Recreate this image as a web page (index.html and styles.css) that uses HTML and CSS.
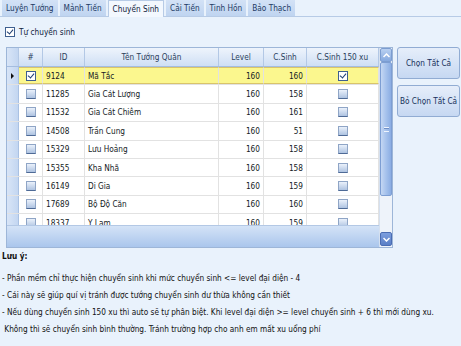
FILE: index.html
```html
<!DOCTYPE html>
<html lang="vi">
  <head>
    <meta charset="UTF-8" />
    <title>Chuyển Sinh</title>
    <link rel="stylesheet" href="styles.css">
  </head>

  <body>
    <div class="tabs">
      <span class="tab">Luyện Tướng</span>
      <span class="tab">Mảnh Tiến</span>
      <span class="tab active">Chuyển Sinh</span>
      <span class="tab">Cải Tiến</span>
      <span class="tab">Tinh Hồn</span>
      <span class="tab">Bảo Thạch</span>
    </div>

    <label class="auto">
      <span class="cb checked"></span>
      Tự chuyển sinh
    </label>

    <div class="main">
      <div class="grid">
        <div class="grid-main">
          <div class="row head">
            <div class="sel"></div>
            <div>#</div>
            <div>ID</div>
            <div>Tên Tướng Quân</div>
            <div>Level</div>
            <div>C.Sinh</div>
            <div>C.Sinh 150 xu</div>
          </div>
          <div class="body">
            <div class="row current">
              <div class="sel"><span class="arrow"></span></div>
              <div class="c"><span class="cb checked"></span></div>
              <div>9124</div>
              <div>Mã Tắc</div>
              <div class="r">160</div>
              <div class="r">160</div>
              <div class="c"><span class="cb checked"></span></div>
            </div>
            <div class="row">
              <div class="sel"></div>
              <div class="c"><span class="cb"></span></div>
              <div>11285</div>
              <div>Gia Cát Lượng</div>
              <div class="r">160</div>
              <div class="r">158</div>
              <div class="c"><span class="cb"></span></div>
            </div>
            <div class="row">
              <div class="sel"></div>
              <div class="c"><span class="cb"></span></div>
              <div>11532</div>
              <div>Gia Cát Chiêm</div>
              <div class="r">160</div>
              <div class="r">161</div>
              <div class="c"><span class="cb"></span></div>
            </div>
            <div class="row">
              <div class="sel"></div>
              <div class="c"><span class="cb"></span></div>
              <div>14508</div>
              <div>Trần Cung</div>
              <div class="r">160</div>
              <div class="r">51</div>
              <div class="c"><span class="cb"></span></div>
            </div>
            <div class="row">
              <div class="sel"></div>
              <div class="c"><span class="cb"></span></div>
              <div>15329</div>
              <div>Lưu Hoảng</div>
              <div class="r">160</div>
              <div class="r">158</div>
              <div class="c"><span class="cb"></span></div>
            </div>
            <div class="row">
              <div class="sel"></div>
              <div class="c"><span class="cb"></span></div>
              <div>15355</div>
              <div>Kha Nhã</div>
              <div class="r">160</div>
              <div class="r">158</div>
              <div class="c"><span class="cb"></span></div>
            </div>
            <div class="row">
              <div class="sel"></div>
              <div class="c"><span class="cb"></span></div>
              <div>16149</div>
              <div>Di Gia</div>
              <div class="r">160</div>
              <div class="r">159</div>
              <div class="c"><span class="cb"></span></div>
            </div>
            <div class="row">
              <div class="sel"></div>
              <div class="c"><span class="cb"></span></div>
              <div>17689</div>
              <div>Bộ Độ Căn</div>
              <div class="r">160</div>
              <div class="r">160</div>
              <div class="c"><span class="cb"></span></div>
            </div>
            <div class="row">
              <div class="sel"></div>
              <div class="c"><span class="cb"></span></div>
              <div>18337</div>
              <div>Y Lam</div>
              <div class="r">160</div>
              <div class="r">159</div>
              <div class="c"><span class="cb"></span></div>
            </div>
          </div>
          <div class="foot"></div>
        </div>

        <div class="vscroll">
          <div class="sb-btn up">
            <svg width="7" height="5" viewBox="0 0 7 5"><path d="M0.5 4 L3.5 1 L6.5 4" fill="none" stroke="#fff" stroke-width="1.5"/></svg>
          </div>
          <div class="sb-thumb"><span class="grip"></span></div>
          <div class="sb-track"></div>
          <div class="sb-btn down">
            <svg width="7" height="5" viewBox="0 0 7 5"><path d="M0.5 1 L3.5 4 L6.5 1" fill="none" stroke="#fff" stroke-width="1.5"/></svg>
          </div>
        </div>
      </div>

      <div class="actions">
        <button class="btn">Chọn Tất Cả</button>
        <button class="btn">Bỏ Chọn Tất Cả</button>
      </div>
    </div>

    <div class="notes">
      <p class="title">Lưu ý:</p>
      <p>- Phần mềm chỉ thực hiện chuyển sinh khi mức chuyển sinh &lt;= level đại diện - 4</p>
      <p>- Cái này sẽ giúp quí vị tránh được tướng chuyển sinh dư thừa không cần thiết</p>
      <p>- Nếu dùng chuyển sinh 150 xu thì auto sẽ tự phân biệt. Khi level đại diện &gt;= level chuyển sinh + 6 thì mới dùng xu.</p>
      <p>&nbsp;Không thì sẽ chuyển sinh bình thường. Tránh trường hợp cho anh em mất xu uổng phí</p>
    </div>
  </body>
</html>
```

FILE: styles.css
```css
* {
  margin: 0;
  padding: 0;
  box-sizing: border-box;
}

body {
  font-family: "DejaVu Sans Condensed", "Liberation Sans", sans-serif;
  font-size: 8.2px;
  color: #141a24;
  background: #e9f2fc;
  width: 461px;
  height: 346px;
  overflow: hidden;
}

/* tab strip */
.tabs {
  display: flex;
  gap: 2px;
  height: 17px;
  padding-left: 2px;
  border-bottom: 1px solid #b7cbe6;
}

.tab {
  display: flex;
  align-items: center;
  padding: 0 4px;
  height: 16px;
  background: linear-gradient(#d3e2f6, #bfd4f0);
  color: #1d3a64;
}

.tab.active {
  background: #f3f8fe;
  height: 17px;
  border: 1px solid #b7cbe6;
  border-bottom: none;
  color: #10223c;
}

/* auto checkbox */
.auto {
  display: flex;
  align-items: center;
  gap: 4px;
  height: 30px;
  padding-left: 5px;
  color: #10223c;
}

.cb {
  display: inline-block;
  position: relative;
  width: 10px;
  height: 10px;
  border: 1px solid #8fa5c6;
  border-bottom-color: #4e6a96;
  background: linear-gradient(#eaf1fb, #aec3e1);
}

.cb.checked {
  background: #fff;
  border-color: #3e5f8f;
}

.cb.checked::after {
  content: "";
  position: absolute;
  left: 2px;
  top: 0px;
  width: 3px;
  height: 5px;
  border: solid #1c3d73;
  border-width: 0 1.5px 1.5px 0;
  transform: rotate(40deg);
}

/* grid */
.main {
  display: flex;
  gap: 4px;
  padding-left: 6px;
}

.grid {
  display: flex;
  width: 387px;
  height: 201px;
  border: 1px solid #9db6d8;
  background: #fff;
}

.grid-main {
  flex: 1;
  display: flex;
  flex-direction: column;
  min-width: 0;
}

.row {
  display: grid;
  grid-template-columns: 12px 24px 42px 134px 45px 43px 72px;
  height: 18.4px;
  border-bottom: 1px solid #e2e2e2;
  flex-shrink: 0;
}

.row > div {
  display: flex;
  align-items: center;
  padding: 0 3px;
  border-right: 1px solid #e2e2e2;
  white-space: nowrap;
  overflow: hidden;
}

.row > div.r {
  justify-content: flex-end;
}

.row > div.c {
  justify-content: center;
}

.row > .sel {
  background: linear-gradient(90deg, #d8e5f7, #c3d6f1);
  border-right: 1px solid #a9c1e3;
  padding: 0;
}

.row.head {
  height: 19px;
  background: linear-gradient(#eef4fc, #cfdff4);
  border-bottom: 1px solid #a4bde0;
  color: #2b3f5c;
}

.row.head > div {
  justify-content: center;
  border-right: 1px solid #b3c8e5;
}

.body {
  flex: 1;
  overflow: hidden;
}

.row.current > div:not(.sel) {
  background: #fbf78e;
  border-top: 1px solid #d9c46a;
  border-bottom: 1px solid #d9c46a;
}

.arrow {
  margin-left: 4px;
  border-left: 3px solid #111;
  border-top: 3px solid transparent;
  border-bottom: 3px solid transparent;
}

.foot {
  height: 22px;
  background: linear-gradient(#d4e3f7, #aac6ec);
  border-top: 1px solid #b3c8e5;
  flex-shrink: 0;
}

/* vertical scrollbar */
.vscroll {
  width: 13px;
  display: flex;
  flex-direction: column;
  background: #eef3fa;
  border-left: 1px solid #d5e0ef;
}

.sb-btn {
  height: 14px;
  display: flex;
  align-items: center;
  justify-content: center;
  border-radius: 2px;
}

.sb-btn.up {
  background: linear-gradient(#b9d0f1, #86a9df);
  border: 1px solid #7c9dd0;
}

.sb-btn.down {
  background: linear-gradient(#7d9fde, #5a7fc6);
  border: 1px solid #4b6db3;
  margin-bottom: 1px;
}

.sb-thumb {
  height: 134px;
  display: flex;
  align-items: center;
  justify-content: center;
  background: linear-gradient(90deg, #c4d7f3, #a6c2ec 50%, #8bade3);
  border: 1px solid #7d9ed3;
  border-radius: 2px;
}

.grip {
  width: 5px;
  height: 5px;
  border-top: 1px solid #eef4fd;
  border-bottom: 1px solid #eef4fd;
  box-shadow: inset 0 1px 0 #6f8fc6;
}

.sb-track {
  flex: 1;
}

/* buttons */
.actions {
  display: flex;
  flex-direction: column;
  gap: 6px;
  width: 63px;
}

.btn {
  height: 32px;
  font: inherit;
  color: #15305a;
  white-space: nowrap;
  overflow: hidden;
  display: flex;
  align-items: center;
  justify-content: center;
  background: linear-gradient(#e6eefa, #c6d8f2);
  border: 1px solid #91acd3;
  border-radius: 3px;
}

/* notes */
.notes {
  padding: 0 2px;
  color: #111;
}

.notes p {
  line-height: 17px;
  white-space: nowrap;
}

.notes .title {
  font-weight: bold;
  margin-bottom: 5px;
}
```
